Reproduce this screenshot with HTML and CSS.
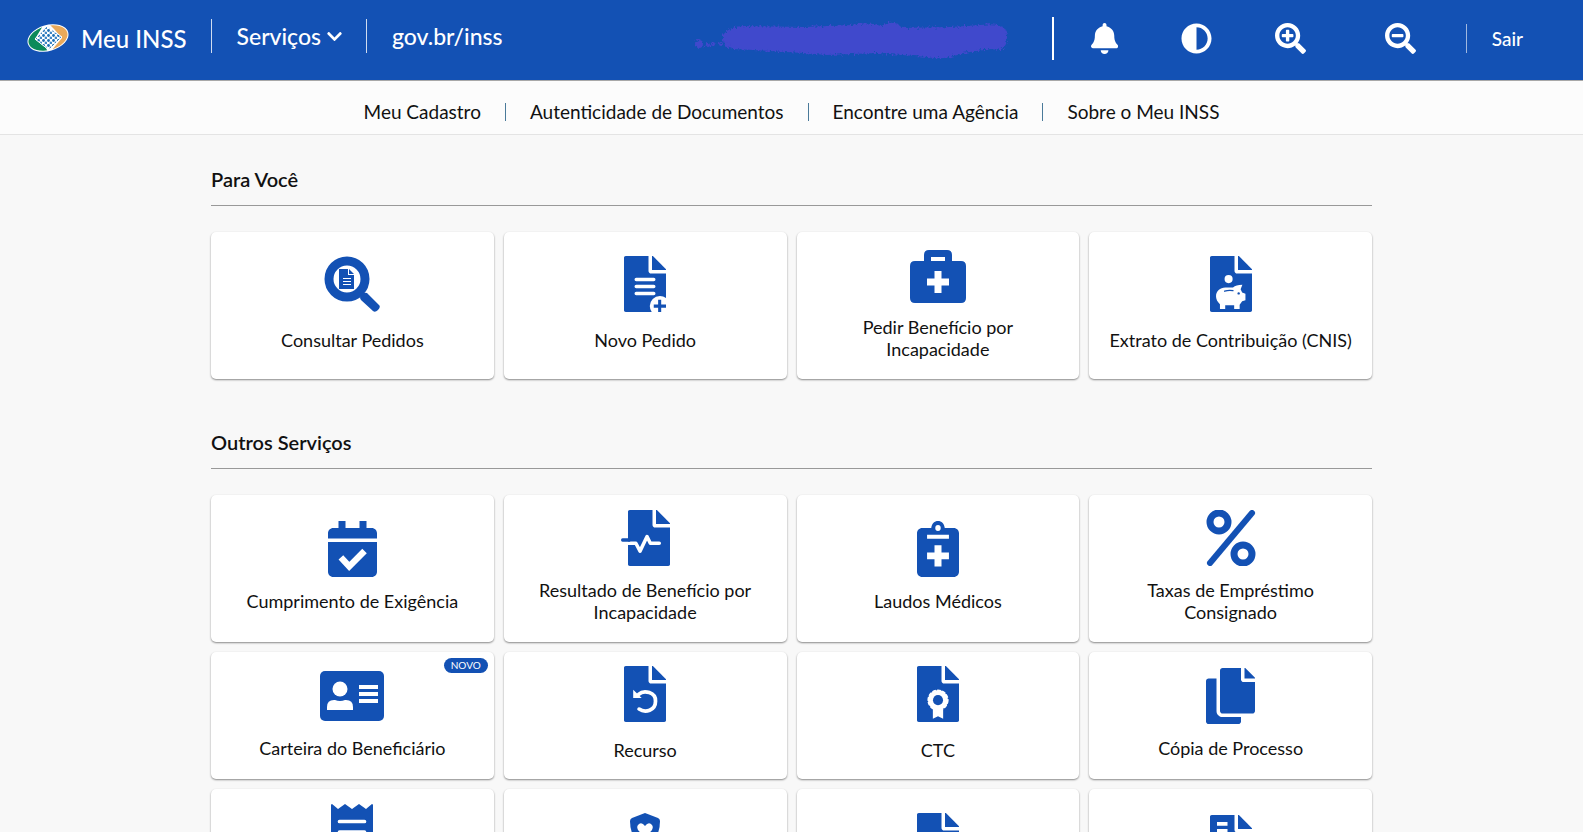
FILE: index.html
```html
<!DOCTYPE html>
<html lang="pt-BR">
<head>
<meta charset="utf-8">
<title>Meu INSS</title>
<meta name="viewport" content="width=device-width, initial-scale=1">
<link rel="stylesheet" href="styles.css">
</head>
<body>
<svg class="defs" aria-hidden="true">
  <defs>
    <g id="doc">
      <path d="M224 136V0H16C7 0 0 7 0 16v480c0 9 7 16 16 16h352c9 0 16-7 16-16V160H248c-13 0-24-11-24-24z"/>
      <path d="M256 0h8l120 122v6H256z"/>
    </g>
  </defs>
</svg>

<header class="topbar">
  <a class="brand" href="#">
    <svg class="brand-logo" viewBox="0 0 42 28" aria-hidden="true">
      <defs>
        <pattern id="dots" width="5" height="5" patternUnits="userSpaceOnUse">
          <rect width="5" height="5" fill="#fff"/>
          <circle cx="1.500" cy="1.500" r="1.400" fill="#1a6fb5"/>
          <circle cx="4" cy="4" r="1.400" fill="#3f87c6"/>
        </pattern>
        <clipPath id="oval"><ellipse cx="21" cy="14" rx="20" ry="12" transform="rotate(-16 21 14)"/></clipPath>
      </defs>
      <ellipse cx="21" cy="14" rx="21" ry="13" fill="#fff" transform="rotate(-16 21 14)"/>
      <g clip-path="url(#oval)">
        <path fill="#0b8a5a" d="M0 0h17L8 15l11 9 2 4H0z"/>
        <path fill="#e9a95b" d="M22 0h20v20L24 27l11-13-8-9z"/>
      </g>
      <path fill="url(#dots)" stroke="#fff" stroke-width="1" d="M20 2 35 13 22 26 8 15z"/>
    </svg>
    <span>Meu INSS</span>
  </a>
  <nav class="topbar-nav" aria-label="Principal">
    <button class="menu-button" type="button">Serviços
      <svg class="chevron" viewBox="0 0 448 512" aria-hidden="true"><path d="M207 381 13 187c-10-9-10-24 0-34l22-22c10-10 25-10 34 0l155 154 155-154c9-10 24-10 34 0l22 22c10 10 10 25 0 34L241 381c-9 10-25 10-34 0z"/></svg>
    </button>
    <a class="site-link" href="#">gov.br/inss</a>
  </nav>
  <svg class="scribble" viewBox="0 0 312 34" aria-hidden="true">
    <defs>
      <filter id="rough" x="-5%" y="-20%" width="110%" height="140%">
        <feTurbulence type="fractalNoise" baseFrequency="0.500" numOctaves="2" seed="4"/>
        <feDisplacementMap in="SourceGraphic" scale="7"/>
      </filter>
    </defs>
    <g filter="url(#rough)">
      <path d="M29 14q6-9 22-9l60 1 46-2q18-4 30 1l8-3q10-1 12 5l50-1 30-2q27-4 26 12 0 16-16 12l-28 4q-20 8-36 4l-50-4-50 2-24-2-50-3-20-1q-12-3-10-14z"/>
      <circle cx="5" cy="23" r="4"/><circle cx="14" cy="24" r="2"/><circle cx="19" cy="23" r="2"/><circle cx="27" cy="23" r="2"/><circle cx="34" cy="24" r="3"/>
    </g>
  </svg>
  <div class="tools">
    <button class="tool" type="button" aria-label="Notificações"><svg viewBox="0 0 448 512"><path d="M224 512c35.300 0 64-28.700 64-64H160c0 35.400 28.700 64 64 64zm215.400-149.700c-19.300-20.800-55.500-52-55.500-154.300 0-77.700-54.500-139.900-127.900-155.200V32c0-17.700-14.300-32-32-32s-32 14.300-32 32v20.800C118.600 68.100 64.100 130.300 64.100 208c0 102.300-36.200 133.500-55.500 154.300-6 6.400-8.700 14.200-8.600 21.700.1 16.400 13 32 32.100 32h383.800c19.100 0 32-15.600 32.100-32 .1-7.600-2.600-15.300-8.600-21.700z"/></svg></button>
    <button class="tool" type="button" aria-label="Alto contraste"><svg viewBox="0 0 512 512"><path d="M8 256c0 137 111 248 248 248s248-111 248-248S393 8 256 8 8 119 8 256zm248 184V72c101.700 0 184 82.300 184 184 0 101.700-82.300 184-184 184z"/></svg></button>
    <button class="tool" type="button" aria-label="Aumentar zoom"><svg viewBox="0 0 512 512"><path d="M304 192v32c0 6.600-5.400 12-12 12h-56v56c0 6.600-5.400 12-12 12h-32c-6.600 0-12-5.400-12-12v-56h-56c-6.600 0-12-5.400-12-12v-32c0-6.600 5.400-12 12-12h56v-56c0-6.600 5.400-12 12-12h32c6.600 0 12 5.400 12 12v56h56c6.600 0 12 5.400 12 12zm201 284.700L476.700 505c-9.400 9.400-24.600 9.400-33.900 0L343 405.300c-4.500-4.500-7-10.600-7-17V372c-35.300 27.600-79.700 44-128 44C93.100 416 0 322.900 0 208S93.100 0 208 0s208 93.100 208 208c0 48.300-16.400 92.700-44 128h16.300c6.400 0 12.500 2.500 17 7l99.700 99.700c9.300 9.400 9.300 24.600 0 34zM344 208c0-75.200-60.800-136-136-136S72 132.800 72 208s60.800 136 136 136 136-60.800 136-136z"/></svg></button>
    <button class="tool tool-last" type="button" aria-label="Diminuir zoom"><svg viewBox="0 0 512 512"><path d="M304 192v32c0 6.600-5.400 12-12 12H124c-6.600 0-12-5.400-12-12v-32c0-6.600 5.400-12 12-12h168c6.600 0 12 5.400 12 12zm201 284.700L476.700 505c-9.400 9.400-24.600 9.400-33.900 0L343 405.300c-4.500-4.500-7-10.600-7-17V372c-35.300 27.600-79.700 44-128 44C93.100 416 0 322.900 0 208S93.100 0 208 0s208 93.100 208 208c0 48.300-16.400 92.700-44 128h16.300c6.400 0 12.500 2.500 17 7l99.700 99.700c9.300 9.400 9.300 24.600 0 34zM344 208c0-75.200-60.800-136-136-136S72 132.800 72 208s60.800 136 136 136 136-60.800 136-136z"/></svg></button>
  </div>
  <a class="logout" href="#">Sair</a>
</header>

<nav class="subnav" aria-label="Secundária">
  <a href="#">Meu Cadastro</a>
  <a href="#">Autenticidade de Documentos</a>
  <a href="#">Encontre uma Agência</a>
  <a href="#">Sobre o Meu INSS</a>
</nav>

<main class="content">
  <section class="group">
    <h2 class="group-title">Para Você</h2>
    <div class="cards">
      <a class="card card-spaced" href="#">
        <svg class="icon" viewBox="0 0 56 56" aria-hidden="true">
          <circle cx="23" cy="23" r="18" fill="none" stroke="currentColor" stroke-width="9"/>
          <path d="M36 42q0-3 2-4 2-2 5-1l12 12q2 2-1 5t-5 1L37 44z"/>
          <path d="M15 13h9v6h6v14H15zM25 13l5 5h-5z"/>
          <path class="cut-line" stroke-width="1" d="M19 22.500h8M19 25.500h8M19 28.500h8"/>
        </svg>
        <span class="label">Consultar Pedidos</span>
      </a>
      <a class="card card-spaced" href="#">
        <svg class="icon icon-page" viewBox="0 0 384 512" aria-hidden="true">
          <use href="#doc"/>
          <path class="cut-line" stroke-width="32" stroke-linecap="round" d="M112 215h160M112 279h160M112 343h160"/>
          <circle class="cut" cx="328" cy="458" r="92"/>
          <path d="M312 400h28v44h44v28h-44v40h-28v-40h-40v-28h40z"/>
        </svg>
        <span class="label">Novo Pedido</span>
      </a>
      <a class="card card-tall" href="#">
        <svg class="icon" viewBox="0 0 56 56" aria-hidden="true">
          <path d="M5 14h9V8q0-5 5-5h18q5 0 5 5v6h9q5 0 5 5v32q0 5-5 5H5q-5 0-5-5V19q0-5 5-5zM21 10v4h14v-4z" fill-rule="evenodd"/>
          <path class="cut" d="M24.500 24h7v7.500H39v7h-7.500V46h-7v-7.500H17v-7h7.500z"/>
        </svg>
        <span class="label">Pedir Benefício por Incapacidade</span>
      </a>
      <a class="card card-spaced" href="#">
        <svg class="icon icon-page" viewBox="0 0 384 512" aria-hidden="true">
          <use href="#doc"/>
          <circle class="cut" cx="170" cy="211" r="37"/>
          <path class="cut" d="M140 288h70c20-18 45-26 86-26l-16 42 14 30 30 10v60l-30 10-23 32v39h-50v-35h-82v35H91v-45c-24-20-36-46-36-72 0-48 37-80 85-80z"/>
          <circle cx="262" cy="342" r="11"/>
          <path fill="none" stroke="currentColor" stroke-width="12" stroke-linecap="round" d="M134 322q36-12 76-5"/>
        </svg>
        <span class="label">Extrato de Contribuição (CNIS)</span>
      </a>
    </div>
  </section>

  <section class="group">
    <h2 class="group-title">Outros Serviços</h2>
    <div class="cards">
      <a class="card" href="#">
        <svg class="icon" viewBox="0 0 448 512" aria-hidden="true">
          <path d="M0 160v-48c0-26 21-48 48-48h48V0h64v64h128V0h64v64h48c27 0 48 22 48 48v48zM0 192h448v272c0 27-21 48-48 48H48c-27 0-48-21-48-48z"/>
          <path class="cut-line" stroke-width="58" d="m118 332 76 84 140-142"/>
        </svg>
        <span class="label">Cumprimento de Exigência</span>
      </a>
      <a class="card card-tall" href="#">
        <svg class="icon" viewBox="-64 0 448 512" aria-hidden="true">
          <use href="#doc"/>
          <path class="cut-line" stroke-width="32" stroke-linejoin="round" stroke-linecap="round" d="M0 304h72l38 72 64-134 30 62h82"/>
          <path d="M-50 258H20v32h-70q-14 0-14-16t14-16z"/>
        </svg>
        <span class="label">Resultado de Benefício por Incapacidade</span>
      </a>
      <a class="card" href="#">
        <svg class="icon icon-page" viewBox="0 0 384 512" aria-hidden="true">
          <path fill-rule="evenodd" d="M48 64h82C136 22 160 0 192 0s56 22 62 64h82c27 0 48 21 48 48v352c0 27-21 48-48 48H48c-27 0-48-21-48-48V112c0-27 21-48 48-48zm144-28a25 28 0 1 0 0 56 25 28 0 1 0 0-56z"/>
          <path class="cut" d="M92 126h200v36H92zM160 222h64v66h68v62h-68v66h-64v-66H92v-62h68z"/>
        </svg>
        <span class="label">Laudos Médicos</span>
      </a>
      <a class="card card-tall" href="#">
        <svg class="icon" viewBox="0 0 50 56" aria-hidden="true">
          <g fill="none" stroke="currentColor">
            <circle cx="13" cy="12" r="9" stroke-width="7"/>
            <circle cx="37" cy="44" r="9" stroke-width="7"/>
            <path stroke-width="6" stroke-linecap="round" d="M46 3 4 53"/>
          </g>
        </svg>
        <span class="label">Taxas de Empréstimo Consignado</span>
      </a>

      <a class="card" href="#">
        <span class="badge">NOVO</span>
        <svg class="icon icon-wide" viewBox="0 0 64 56" aria-hidden="true">
          <rect y="3" width="64" height="50" rx="5"/>
          <circle class="cut" cx="20" cy="21" r="7.500"/>
          <path class="cut" d="M7 42v-3q0-7 7-7h1q5 2 10 0h1q7 0 7 7v3z"/>
          <path class="cut-line" stroke-width="4" d="M39 19h19M39 26h19M39 33h19"/>
        </svg>
        <span class="label">Carteira do Beneficiário</span>
      </a>
      <a class="card card-spaced" href="#">
        <svg class="icon icon-page" viewBox="0 0 384 512" aria-hidden="true">
          <use href="#doc"/>
          <path class="cut-line" stroke-width="34" stroke-linecap="round" d="M134 260c50-48 158-18 154 62 0 84-92 112-150 72"/>
          <path class="cut" d="M84 216l78 76H84z"/>
        </svg>
        <span class="label">Recurso</span>
      </a>
      <a class="card card-spaced" href="#">
        <svg class="icon icon-page" viewBox="0 0 384 512" aria-hidden="true">
          <use href="#doc"/>
          <path class="cut" d="M145 370h94v112l-47-22-47 22z"/>
          <circle class="cut" cx="192" cy="312" r="92"/>
          <circle class="cut-line" cx="192" cy="312" r="90" stroke-width="14" stroke-dasharray="34 12"/>
          <circle cx="192" cy="312" r="46"/>
        </svg>
        <span class="label">CTC</span>
      </a>
      <a class="card" href="#">
        <svg class="icon" viewBox="0 0 448 512" aria-hidden="true">
          <path d="M320 448v40c0 13-11 24-24 24H24c-13 0-24-11-24-24V120c0-13 11-24 24-24h72v296c0 31 25 56 56 56zM320 104V0H152c-13 0-24 11-24 24v368c0 13 11 24 24 24h272c13 0 24-11 24-24V128H344c-13 0-24-11-24-24zM352 0h7l89 90v6h-96z"/>
        </svg>
        <span class="label">Cópia de Processo</span>
      </a>

      <a class="card card-tall" href="#">
        <svg class="icon icon-page" viewBox="0 0 384 512" aria-hidden="true">
          <path d="M0 8Q6-6 18 6l46 40 64-46 64 46 64-46 64 46 46-40q12-12 18 2v496l-64-40-64 46-64-46-64 46-64-46L0 504z"/>
          <path class="cut-line" stroke-width="34" stroke-linecap="round" d="M78 160h228M78 256h228M78 352h228"/>
        </svg>
        <span class="label label-double"></span>
      </a>
      <a class="card card-spaced" href="#">
        <svg class="icon" viewBox="0 0 56 56" aria-hidden="true">
          <path d="M28 0 41 5q2 1 2 3 0 18-15 26Q13 26 13 8q0-2 2-3z"/>
          <path class="cut" d="M28 25 21 17q-2-4 1-6 3-2 6 2 3-4 6-2 3 2 1 6z"/>
        </svg>
        <span class="label"></span>
      </a>
      <a class="card card-spaced" href="#">
        <svg class="icon icon-page" viewBox="0 0 384 512" aria-hidden="true"><use href="#doc"/></svg>
        <span class="label"></span>
      </a>
      <a class="card" href="#">
        <svg class="icon icon-page" viewBox="0 0 384 512" aria-hidden="true">
          <use href="#doc"/>
          <path class="cut" d="M64 64h96v34H64zM64 128h96v34H64z"/>
        </svg>
        <span class="label"></span>
      </a>
    </div>
  </section>
</main>
</body>
</html>
```
FILE: styles.css
```css
:root {
  --blue: #1351b4;
  --page: #f8f8f8;
}

* {
  box-sizing: border-box;
}

body {
  margin: 0;
  height: 100vh;
  overflow: hidden;
  background: var(--page);
  color: #111;
  font-family: Lato, "Open Sans", sans-serif;
}

a {
  color: inherit;
  text-decoration: none;
}

button {
  padding: 0;
  border: 0;
  background: none;
  color: inherit;
  font: inherit;
  cursor: pointer;
}

svg {
  display: block;
  fill: currentColor;
}

.defs {
  position: absolute;
  width: 0;
  height: 0;
}

/* Top bar */
.topbar {
  display: flex;
  align-items: center;
  height: 80px;
  padding: 0 60px 4px 27px;
  background: var(--blue);
  color: #fff;
  font-size: 23px;
  font-weight: 500;
}

.brand {
  display: flex;
  align-items: center;
  gap: 12px;
  padding-right: 24px;
  font-size: 24px;
}

.brand-logo {
  width: 42px;
  height: 28px;
}

.topbar-nav {
  display: flex;
  align-items: center;
  line-height: 34px;
  padding-bottom: 4px;
}

.menu-button,
.site-link {
  padding-left: 25px;
  border-left: 1px solid #d0dcf0;
}

.menu-button {
  display: flex;
  align-items: center;
  gap: 6px;
  padding-right: 24px;
}

.chevron {
  width: 15px;
  height: 17px;
}

.scribble {
  width: 312px;
  height: 34px;
  margin-left: auto;
  overflow: visible;
  color: #3f48cc;
}

.tools {
  display: flex;
  align-items: center;
  gap: 63px;
  height: 43px;
  margin-left: 46px;
  padding-left: 37px;
  border-left: 2px solid #fff;
}

.tool svg {
  height: 31px;
}

.tool-last {
  margin-left: 16px;
}

.logout {
  margin-left: 50px;
  padding-left: 25px;
  border-left: 1px solid #a0b8e0;
  font-size: 19px;
  line-height: 29px;
}

/* Secondary navigation */
.subnav {
  display: flex;
  justify-content: center;
  padding: 22px 0 13px;
  border-top: 1px solid #a8a8a8;
  border-bottom: 1px solid #e4e4e4;
  background: #fcfcfc;
  font-size: 19px;
  line-height: 18px;
}

.subnav a {
  padding: 0 24px;
}

.subnav a + a {
  border-left: 1px solid #4a7a9a;
}

/* Service groups */
.content {
  width: 100%;
  max-width: 1161px;
  margin: 0 auto;
  padding-top: 31px;
}

.group {
  margin-bottom: 50px;
}

.group-title {
  margin: 0 0 26px;
  padding-bottom: 13px;
  border-bottom: 1px solid #999;
  font-size: 20px;
  font-weight: 600;
  line-height: 26px;
}

.cards {
  display: grid;
  grid-template-columns: repeat(4, 1fr);
  grid-auto-rows: minmax(127px, auto);
  gap: 10px;
}

.card {
  position: relative;
  display: flex;
  flex-direction: column;
  align-items: center;
  justify-content: center;
  gap: 13px;
  padding: 0 18px 4px;
  border-radius: 5px;
  background: #fff;
  box-shadow: 0 1px 2px rgba(0, 0, 0, 0.45);
  font-size: 18px;
  line-height: 22px;
  text-align: center;
}

.card-spaced {
  gap: 17px;
}

.card-tall {
  min-height: 147px;
}

.icon {
  height: 56px;
  color: var(--blue);
}

.icon-page {
  width: 42px;
}

.icon-wide {
  width: 64px;
}

.cut {
  fill: #fff;
}

.cut-line {
  fill: none;
  stroke: #fff;
}

.label {
  max-width: 246px;
  min-height: 22px;
}

.label-double {
  min-height: 44px;
}

.badge {
  position: absolute;
  top: 6px;
  right: 6px;
  padding: 0 7px;
  border-radius: 8px;
  background: var(--blue);
  color: #fff;
  font-size: 10px;
  line-height: 15px;
}
```
